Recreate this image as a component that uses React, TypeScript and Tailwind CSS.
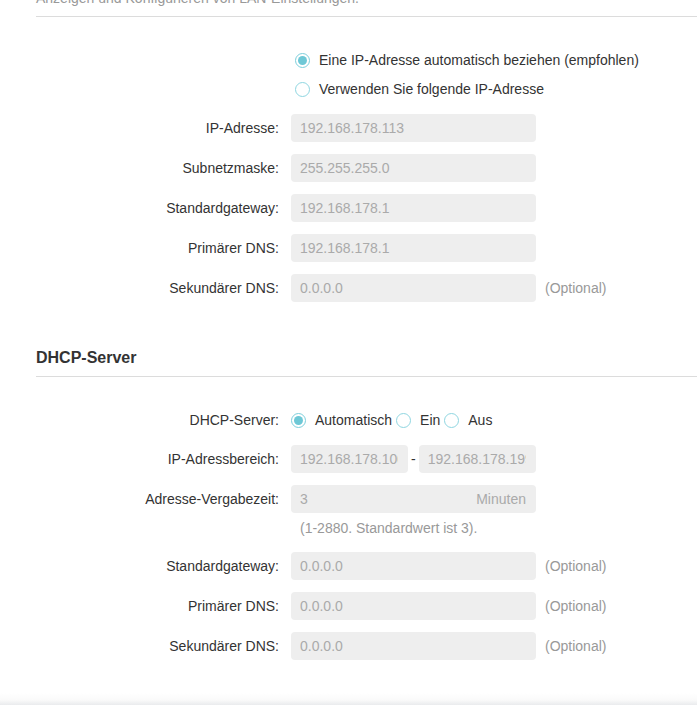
import type { ReactNode } from "react";

const font = { fontFamily: '"Liberation Sans", Arial, sans-serif' };

function Radio({ checked, label }: { checked?: boolean; label: string }) {
  return (
    <label className="flex items-center">
      <span
        className={`flex h-[15px] w-[15px] items-center justify-center rounded-full border ${
          checked ? "border-[#7ccfdc]" : "border-[#8fd6e1]"
        } bg-white`}
      >
        {checked && <span className="h-[9px] w-[9px] rounded-full bg-[#6ec8d6]" />}
      </span>
      <span className="ml-[9px] text-[14px] text-[#333]">{label}</span>
    </label>
  );
}

function Field({
  label,
  children,
  optional,
}: {
  label: string;
  children: ReactNode;
  optional?: boolean;
}) {
  return (
    <div className="flex h-[28px] items-center">
      <div className="w-[243px] text-right text-[14px] text-[#333]">{label}</div>
      <div className="ml-[12px] flex items-center">{children}</div>
      {optional && <span className="ml-[9px] text-[14px] text-[#999]">(Optional)</span>}
    </div>
  );
}

function Input({ value, width = "w-[245px]", suffix }: { value: string; width?: string; suffix?: string }) {
  return (
    <div
      className={`flex h-[28px] ${width} items-center justify-between rounded-[4px] bg-[#eeeeee] pl-[9px] pr-[10px] text-[14px] text-[#aaa]`}
    >
      <span className="min-w-0 flex-1 overflow-hidden whitespace-nowrap">{value}</span>
      {suffix && <span>{suffix}</span>}
    </div>
  );
}

export default function App() {
  return (
    <div className="h-[705px] overflow-hidden bg-white" style={font}>
      <div className="pl-[36px]">
        {/* LAN section header (scrolled) */}
        <div className="-mt-[12px] border-b border-[#dcdcdc] pb-[8px] text-[14px] leading-[20px] text-[#999]">
          Anzeigen und Konfigurieren von LAN-Einstellungen.
        </div>

        <div className="mt-[29px] flex flex-col pl-[259px]">
          <div className="flex h-[29px] items-center">
            <Radio checked label="Eine IP-Adresse automatisch beziehen (empfohlen)" />
          </div>
          <div className="flex h-[29px] items-center">
            <Radio label="Verwenden Sie folgende IP-Adresse" />
          </div>
        </div>

        <div className="mt-[10px] flex flex-col gap-[12px]">
          <Field label="IP-Adresse:">
            <Input value="192.168.178.113" />
          </Field>
          <Field label="Subnetzmaske:">
            <Input value="255.255.255.0" />
          </Field>
          <Field label="Standardgateway:">
            <Input value="192.168.178.1" />
          </Field>
          <Field label="Primärer DNS:">
            <Input value="192.168.178.1" />
          </Field>
          <Field label="Sekundärer DNS:" optional>
            <Input value="0.0.0.0" />
          </Field>
        </div>

        {/* DHCP section */}
        <div className="mt-[46px] border-b border-[#dcdcdc] pb-[8px] text-[16px] font-bold leading-[20px] text-[#333]">
          DHCP-Server
        </div>

        <div className="mt-[29px] flex flex-col">
          <Field label="DHCP-Server:">
            <div className="flex items-center gap-[4px]">
              <Radio checked label="Automatisch" />
              <Radio label="Ein" />
              <Radio label="Aus" />
            </div>
          </Field>
          <div className="mt-[11px]">
            <Field label="IP-Adressbereich:">
              <Input value="192.168.178.100" width="w-[117px]" />
              <span className="mx-[3px] text-[14px] text-[#333]">-</span>
              <Input value="192.168.178.199" width="w-[117px]" />
            </Field>
          </div>
          <div className="mt-[12px]">
            <Field label="Adresse-Vergabezeit:">
              <Input value="3" suffix="Minuten" />
            </Field>
          </div>
          <div className="mt-[5px] pl-[264px] text-[14px] leading-[20px] text-[#999]">
            (1-2880. Standardwert ist 3).
          </div>
          <div className="mt-[14px] flex flex-col gap-[12px]">
            <Field label="Standardgateway:" optional>
              <Input value="0.0.0.0" />
            </Field>
            <Field label="Primärer DNS:" optional>
              <Input value="0.0.0.0" />
            </Field>
            <Field label="Sekundärer DNS:" optional>
              <Input value="0.0.0.0" />
            </Field>
          </div>
        </div>
      </div>

      <div className="mt-[33px] h-[14px] bg-gradient-to-b from-white via-[#fafafa] to-[#e3e5e8]" />
    </div>
  );
}
